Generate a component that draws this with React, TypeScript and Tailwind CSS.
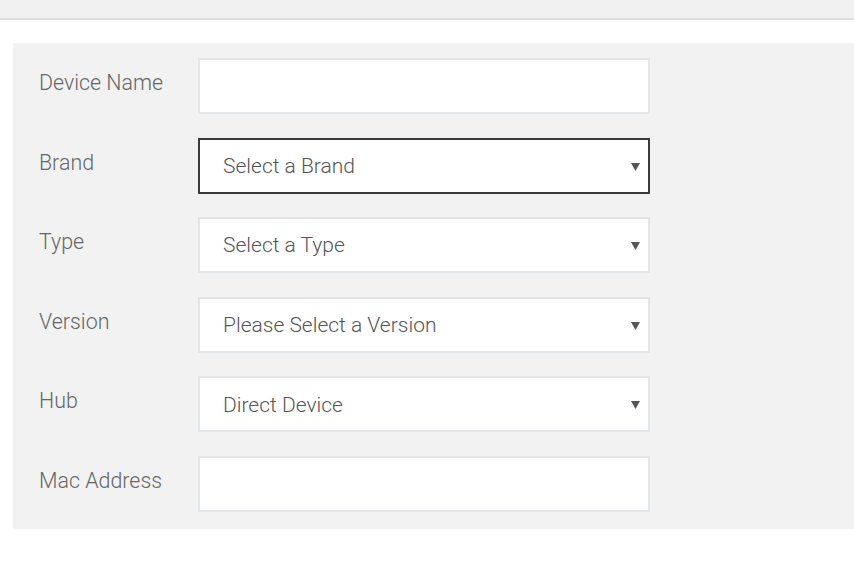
import React from 'react';

const fields = [
  { label: 'Device Name', kind: 'input', value: '' },
  { label: 'Brand', kind: 'select', value: 'Select a Brand', focused: true },
  { label: 'Type', kind: 'select', value: 'Select a Type' },
  { label: 'Version', kind: 'select', value: 'Please Select a Version' },
  { label: 'Hub', kind: 'select', value: 'Direct Device' },
  { label: 'Mac Address', kind: 'input', value: '' },
];

function Caret() {
  return (
    <svg width="9" height="8" viewBox="0 0 9 8" className="fill-[#555]">
      <path d="M0 0 H9 L4.5 8 Z" />
    </svg>
  );
}

export default function App() {
  return (
    <div className="min-h-[568px] bg-white font-['Roboto',sans-serif]">
      <div className="h-5 bg-[#f1f1f1] border-b-2 border-[#dcdcdc]" />

      <div className="ml-[13px] mt-[23px] bg-[#f1f2f1] pt-[15px] pb-[17px] pl-[26px] flex flex-col gap-[23.6px]">
        {fields.map((f) => (
          <div key={f.label} className="flex items-start">
            <label className="w-[159px] pt-[13px] text-[21.4px] font-light leading-[24px] text-[#666]">{f.label}</label>
            {f.kind === 'input' ? (
              <input
                type="text"
                className="w-[452px] h-[56px] bg-white border-2 border-[#e3e6e8] px-[22px] text-[21px] font-light text-[#555] outline-none"
              />
            ) : (
              <div
                className={
                  'w-[452px] h-[56px] bg-white border-2 flex items-center justify-between pl-[23px] pr-[8px] pt-[2px] ' +
                  (f.focused ? 'border-[#3a3a3a]' : 'border-[#e3e6e8]')
                }
              >
                <span className="text-[21px] font-light text-[#555]">{f.value}</span>
                <Caret />
              </div>
            )}
          </div>
        ))}
      </div>
    </div>
  );
}
